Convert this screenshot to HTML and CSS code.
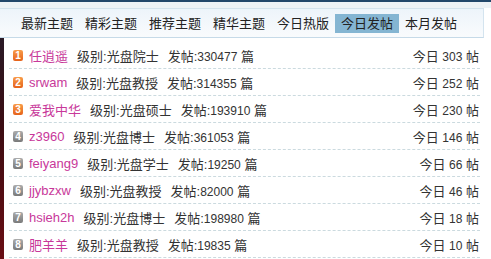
FILE: index.html
```html
<!DOCTYPE html>
<html lang="zh">
<head>
<meta charset="utf-8">
<link rel="stylesheet" href="styles.css">
</head>
<body>
<div class="topline"></div>
<div class="gap"></div>
<div class="tabbar">
  <span class="tab">最新主题</span>
  <span class="tab">精彩主题</span>
  <span class="tab">推荐主题</span>
  <span class="tab">精华主题</span>
  <span class="tab">今日热版</span>
  <span class="tab active">今日发帖</span>
  <span class="tab">本月发帖</span>
</div>
<div class="main">
  <div class="edge"></div>
  <ul class="list">
    <li class="row"><span class="rank hot">1</span><a class="name">任逍遥</a><span class="lvl">级别:光盘院士</span><span class="posts">发帖:<span class="num">330477</span> 篇</span><span class="today">今日 <span class="num">303</span> 帖</span></li>
    <li class="row"><span class="rank hot">2</span><a class="name">srwam</a><span class="lvl">级别:光盘教授</span><span class="posts">发帖:<span class="num">314355</span> 篇</span><span class="today">今日 <span class="num">252</span> 帖</span></li>
    <li class="row"><span class="rank hot">3</span><a class="name">爱我中华</a><span class="lvl">级别:光盘硕士</span><span class="posts">发帖:<span class="num">193910</span> 篇</span><span class="today">今日 <span class="num">230</span> 帖</span></li>
    <li class="row"><span class="rank">4</span><a class="name">z3960</a><span class="lvl">级别:光盘博士</span><span class="posts">发帖:<span class="num">361053</span> 篇</span><span class="today">今日 <span class="num">146</span> 帖</span></li>
    <li class="row"><span class="rank">5</span><a class="name">feiyang9</a><span class="lvl">级别:光盘学士</span><span class="posts">发帖:<span class="num">19250</span> 篇</span><span class="today">今日 <span class="num">66</span> 帖</span></li>
    <li class="row"><span class="rank">6</span><a class="name">jjybzxw</a><span class="lvl">级别:光盘教授</span><span class="posts">发帖:<span class="num">82000</span> 篇</span><span class="today">今日 <span class="num">46</span> 帖</span></li>
    <li class="row"><span class="rank">7</span><a class="name">hsieh2h</a><span class="lvl">级别:光盘博士</span><span class="posts">发帖:<span class="num">198980</span> 篇</span><span class="today">今日 <span class="num">18</span> 帖</span></li>
    <li class="row"><span class="rank">8</span><a class="name">肥羊羊</a><span class="lvl">级别:光盘教授</span><span class="posts">发帖:<span class="num">19835</span> 篇</span><span class="today">今日 <span class="num">10</span> 帖</span></li>
  </ul>
</div>
</body>
</html>
```

FILE: styles.css
```css
html, body {
  margin: 0;
  padding: 0;
  background: #ffffff;
}
body {
  font-family: "Liberation Sans", "Noto Sans CJK SC", sans-serif;
  font-size: 13px;
  color: #333333;
  overflow: hidden;
}
.topline {
  height: 2px;
  background: #23476a;
}
.gap {
  height: 6px;
  background: #eef2f5;
}
.tabbar {
  display: flex;
  align-items: center;
  height: 28px;
  padding-left: 15px;
  margin-right: 7px;
  border-top: 1px solid #d4e2ec;
  border-bottom: 1px solid #c6dae8;
  border-right: 1px solid #d4e4ef;
  background: linear-gradient(#edf4fa, #f9fbfd);
}
.tab {
  width: 64px;
  height: 19px;
  line-height: 19px;
  text-align: center;
  color: #222222;
  font-size: 13px;
}
.tab.active {
  background: #84b5d2;
}
.main {
  display: flex;
}
.edge {
  width: 4px;
  height: 222px;
  background: linear-gradient(#2a1a26, #3c0c12 40%, #6a0e14);
}
.list {
  list-style: none;
  margin: 0 11px 0 5px;
  padding: 4px 0 0 0;
  flex: 1;
}
.row {
  display: flex;
  align-items: center;
  height: 26px;
  padding: 0 1px 0 4px;
  border-bottom: 1px dashed #cbdadf;
  white-space: nowrap;
}
.rank {
  width: 10px;
  height: 11px;
  border-radius: 2px;
  background: linear-gradient(#acacac, #7a7a7a);
  color: #ffffff;
  font: bold 10px/11px "Liberation Sans", sans-serif;
  text-align: center;
  margin-right: 6px;
  flex: none;
}
.rank.hot {
  background: linear-gradient(#f89c4a, #e6621a);
}
.name {
  color: #c8389a;
  margin-right: 9px;
}
.lvl {
  margin-right: 9px;
}
.num {
  font-size: 12px;
}
.today {
  margin-left: auto;
}
```
